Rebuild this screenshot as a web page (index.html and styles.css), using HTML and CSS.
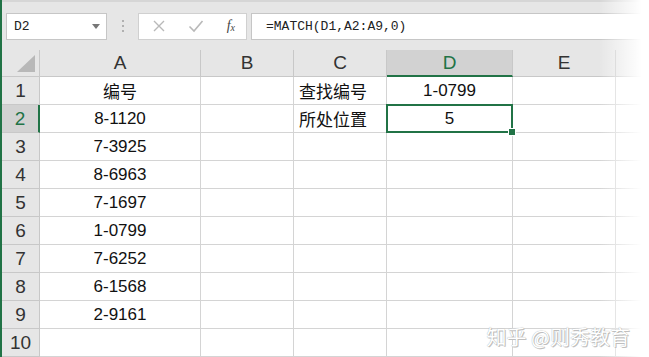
FILE: index.html
```html
<!DOCTYPE html>
<html lang="zh-CN">
<head>
  <meta charset="UTF-8">
  <title>MATCH</title>
  <link rel="stylesheet" href="styles.css">
</head>
<body>
  <div class="app">
    <div class="toolbar">
      <div class="namebox">
        <span>D2</span>
        <span class="namebox__arrow"></span>
      </div>
      <div class="dots"><i></i><i></i><i></i></div>
      <div class="fbuttons">
        <svg width="14" height="14" viewBox="0 0 14 14"><path d="M2 2 L12 12 M12 2 L2 12" stroke="#b9b9b9" stroke-width="1.4" fill="none"/></svg>
        <svg width="16" height="14" viewBox="0 0 16 14"><path d="M1.5 7.5 L6 12 L14.5 2" stroke="#b9b9b9" stroke-width="1.6" fill="none"/></svg>
        <span class="fx">f<sub>x</sub></span>
      </div>
      <div class="formula">=MATCH(D1,A2:A9,0)</div>
    </div>

    <div class="sheet">
      <div class="hd corner"><span class="corner__tri"></span></div>
      <div class="hd col">A</div>
      <div class="hd col">B</div>
      <div class="hd col">C</div>
      <div class="hd col col--active">D</div>
      <div class="hd col">E</div>
      <div class="hd col col--last"></div>

      <div class="hd row">1</div>
      <div class="c center zh">编号</div><div class="c"></div><div class="c zh">查找编号</div><div class="c center">1-0799</div><div class="c"></div><div class="c"></div>

      <div class="hd row row--active">2</div>
      <div class="c center">8-1120</div><div class="c"></div><div class="c zh">所处位置</div><div class="c center c--sel">5</div><div class="c"></div><div class="c"></div>

      <div class="hd row">3</div>
      <div class="c center">7-3925</div><div class="c"></div><div class="c"></div><div class="c"></div><div class="c"></div><div class="c"></div>

      <div class="hd row">4</div>
      <div class="c center">8-6963</div><div class="c"></div><div class="c"></div><div class="c"></div><div class="c"></div><div class="c"></div>

      <div class="hd row">5</div>
      <div class="c center">7-1697</div><div class="c"></div><div class="c"></div><div class="c"></div><div class="c"></div><div class="c"></div>

      <div class="hd row">6</div>
      <div class="c center">1-0799</div><div class="c"></div><div class="c"></div><div class="c"></div><div class="c"></div><div class="c"></div>

      <div class="hd row">7</div>
      <div class="c center">7-6252</div><div class="c"></div><div class="c"></div><div class="c"></div><div class="c"></div><div class="c"></div>

      <div class="hd row">8</div>
      <div class="c center">6-1568</div><div class="c"></div><div class="c"></div><div class="c"></div><div class="c"></div><div class="c"></div>

      <div class="hd row">9</div>
      <div class="c center">2-9161</div><div class="c"></div><div class="c"></div><div class="c"></div><div class="c"></div><div class="c"></div>

      <div class="hd row">10</div>
      <div class="c"></div><div class="c"></div><div class="c"></div><div class="c"></div><div class="c"></div><div class="c"></div>
    </div>

    <div class="fade"></div>
    <div class="watermark">知乎 @则秀教育</div>
  </div>
</body>
</html>
```
FILE: styles.css
```css
* {
  box-sizing: border-box;
}

body {
  margin: 0;
  background: #ffffff;
  font-family: 'Liberation Sans', 'Noto Sans CJK SC', sans-serif;
  overflow: hidden;
}

.app {
  position: relative;
  width: 649px;
  height: 357px;
  border-left: 2px solid #217346;
  overflow: hidden;
}

/* formula bar */
.toolbar {
  display: flex;
  align-items: center;
  height: 50px;
  padding: 0 0 0 4px;
  background: #e6e6e6;
  border-top: 2px solid #d6d6d6;
}

.namebox {
  display: flex;
  align-items: center;
  justify-content: space-between;
  width: 101px;
  height: 27px;
  padding: 0 6px 0 7px;
  background: #fff;
  border: 1px solid #c6c6c6;
  font-family: 'Liberation Mono', monospace;
  font-size: 13px;
  color: #222;
}

.namebox__arrow {
  width: 0;
  height: 0;
  border-left: 4px solid transparent;
  border-right: 4px solid transparent;
  border-top: 5px solid #777;
}

.dots {
  display: flex;
  flex-direction: column;
  gap: 3px;
  margin: 0 14px 0 15px;
}

.dots i {
  display: block;
  width: 2px;
  height: 2px;
  background: #b0b0b0;
}

.fbuttons {
  display: flex;
  align-items: center;
  justify-content: space-between;
  width: 109px;
  height: 27px;
  padding: 0 11px 0 13px;
  background: #fff;
  border: 1px solid #d0d0d0;
}

.fx {
  font-family: 'Liberation Serif', serif;
  font-style: italic;
  font-size: 14px;
  color: #444;
}

.fx sub {
  font-size: 10px;
  vertical-align: -1px;
}

.formula {
  flex: 1;
  height: 27px;
  margin-left: 4px;
  padding: 0 0 0 14px;
  background: #fff;
  border: 1px solid #c6c6c6;
  border-right: 0;
  font-family: 'Liberation Mono', monospace;
  font-size: 13px;
  line-height: 25px;
  color: #222;
}

/* grid */
.sheet {
  display: grid;
  grid-template-columns: 38px 161px 93px 93px 126px 103px 1fr;
  grid-template-rows: 27px repeat(10, 28px);
}

.hd {
  display: flex;
  align-items: center;
  justify-content: center;
  background: #e6e6e6;
  color: #333;
  font-size: 19px;
  border-right: 1px solid #c8c8c8;
  border-bottom: 1px solid #c8c8c8;
}

.corner {
  position: relative;
}

.corner__tri {
  position: absolute;
  right: 4px;
  bottom: 4px;
  width: 0;
  height: 0;
  border-left: 18px solid transparent;
  border-bottom: 17px solid #b8b8b8;
}

.col--active {
  background: #d2d2d2;
  color: #217346;
  border-bottom: 2px solid #217346;
}

.col--last {
  border-right: 0;
}

.row {
  background: #e6e6e6;
  font-size: 19px;
}

.row--active {
  background: #d2d2d2;
  color: #217346;
  border-right: 2px solid #217346;
}

.c {
  display: flex;
  align-items: center;
  padding: 0 5px;
  font-size: 17px;
  color: #111;
  border-right: 1px solid #d4d4d4;
  border-bottom: 1px solid #d4d4d4;
}

.center {
  justify-content: center;
}

.zh {
  font-family: 'Noto Sans CJK SC', sans-serif;
  font-size: 17px;
}

.c--sel {
  position: relative;
}

.c--sel::before {
  content: "";
  position: absolute;
  left: -1px;
  top: -1px;
  right: -1px;
  bottom: -1px;
  border: 2px solid #217346;
}

.c--sel::after {
  content: "";
  position: absolute;
  right: -4px;
  bottom: -4px;
  width: 6px;
  height: 6px;
  background: #217346;
  border: 1px solid #fff;
}

.fade {
  position: absolute;
  top: 0;
  right: 0;
  width: 50px;
  height: 100%;
  background: linear-gradient(to right, rgba(255, 255, 255, 0), #fff 85%);
}

.watermark {
  position: absolute;
  right: 19px;
  bottom: 6px;
  font-family: 'Noto Sans CJK SC', sans-serif;
  font-size: 20px;
  color: #fff;
  text-shadow: 0 0 1px #9a9a9a, 1px 1px 0 #c4c4c4;
}
```
